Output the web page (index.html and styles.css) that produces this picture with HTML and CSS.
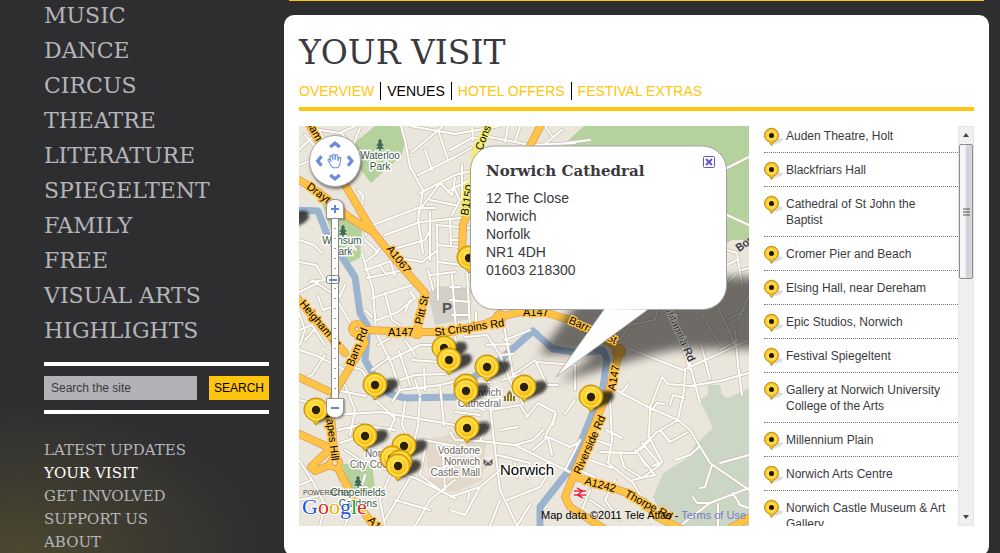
FILE: index.html
```html
<!DOCTYPE html>
<html lang="en">
<head>
<meta charset="utf-8">
<title>Your Visit - Venues</title>
<link rel="stylesheet" href="styles.css">
</head>
<body>
<div class="page">
<aside class="sidebar">
  <nav class="nav-main" aria-label="Programme">
    <a href="#">MUSIC</a><a href="#">DANCE</a><a href="#">CIRCUS</a><a href="#">THEATRE</a><a href="#">LITERATURE</a><a href="#">SPIEGELTENT</a><a href="#">FAMILY</a><a href="#">FREE</a><a href="#">VISUAL ARTS</a><a href="#">HIGHLIGHTS</a>
  </nav>
  <form class="search">
    <input class="search-box" type="text" value="Search the site" aria-label="Search the site">
    <button class="search-button" type="button">SEARCH</button>
  </form>
  <nav class="nav-sub" aria-label="Site">
    <a href="#">LATEST UPDATES</a><a href="#" class="current">YOUR VISIT</a><a href="#">GET INVOLVED</a><a href="#">SUPPORT US</a><a href="#">ABOUT</a>
  </nav>
</aside>
<div class="column">
<div class="banner-end"></div>
<main class="card">
  <h1>YOUR VISIT</h1>
  <nav class="tabs" aria-label="Your visit">
    <a href="#">OVERVIEW</a><a href="#" class="current">VENUES</a><a href="#">HOTEL OFFERS</a><a href="#">FESTIVAL EXTRAS</a>
  </nav>
  <div class="content">
  <section class="map" aria-label="Venue map">
    <svg class="map-art" viewBox="299 126 450 400" preserveAspectRatio="xMinYMin slice">
      <defs>
        <radialGradient id="pinFill" cx=".45" cy=".4" r=".62"><stop offset="0" stop-color="#fff29a"/><stop offset=".45" stop-color="#ffd832"/><stop offset="1" stop-color="#f0b400"/></radialGradient>
        <filter id="soft" x="-50%" y="-50%" width="200%" height="200%"><feGaussianBlur stdDeviation="1.600"/></filter>
        <filter id="wide" x="-20%" y="-30%" width="140%" height="160%"><feGaussianBlur stdDeviation="5"/></filter>
        <g id="shade"><path d="M-1 14L5 1Q10 -8 20 -6Q27 -1 18 6Q8 11 -1 14z" fill="#000" opacity=".7" filter="url(#soft)"/></g>
        <g id="pin">
          <path d="M-3.500 10.500L0 15L3.500 10.500A12 11.500 0 1 0 -3.500 10.500z" fill="#f5bd0c" stroke="#b98a08"/>
          <circle r="9.500" fill="url(#pinFill)" stroke="#ffe36b" stroke-width="1.500"/>
          <circle r="4.200" fill="#2b2008"/>
        </g>
        <g id="tree"><path d="M0 -6L3 -2H1.500L4.500 2H2L5 5H1V7H-1V5H-5L-2 2H-4.500L-1.500 -2H-3z" fill="#3d6e50" stroke="#e5efdc" stroke-width=".5"/></g>
        <g id="minor">
          <path d="M401 126L405 140L410 167L423 190L418 220L423 253M410 126L455 134L500 126M412 152L442 127M418 175L455 157L471 148M420 193L455 175L471 171M425 150L432 170M438 130L448 160M418 212L440 183L452 195L455 178M430 200L455 205M373 225L418 208L436 208M385 235L420 222L471 217M390 250L425 240L430 230M358 190L363 196L362 205L357 212L365 222L366 235M299 150L320 130L340 133L355 126M299 165L312 160M305 135L318 150M318 129L325 140M430 212V260M436 225L471 228M437 226L438 300M438 245L471 248M438 262L462 265M450 218L451 245M341 132L352 148M360 128L352 148"/>
          <path d="M365 270L400 258L422 262L438 250M367 278L403 270M372 298L412 285M362 253L373 290L376 330M377 320L398 312L415 298L410 292M385 293L392 320L400 325M380 266L387 275M390 260L395 276M377 334L392 365L400 390M390 360L420 345L440 345M372 370L390 357M299 262L316 265L325 280L310 282M312 280L335 295M299 292L318 283M299 330L312 325L325 345M299 350L315 355L345 370M325 355L312 375L299 380M318 296L323 310L340 304M337 300L352 326M345 285L338 300M365 310L372 317M299 240L314 245L322 253M305 340L314 330M345 365L362 370L367 378M410 300L405 312M405 340L415 355M378 345L390 338M399 351L410 385M345 235L356 250M365 240L378 252L365 262M385 243L376 252M430 275L455 272M428 270L433 290M299 313L305 330L300 345"/>
          <path d="M335 415L380 412L455 425L487 423M338 430L360 425L395 430M375 400L395 418L385 440M299 400L320 405M345 385L355 410L350 435M335 390L366 396M392 402L400 390L440 385L470 378M405 402L402 425L410 440M420 398L418 426L412 450M440 385L444 425M372 465L415 478L455 498M410 478L385 520M455 480L430 500L415 526M340 443L370 433M345 450L360 460M365 475L358 500M390 475L380 500L385 526M299 460L312 480L325 505L320 526M299 485L312 480M340 480L352 505L345 526M299 500L318 496M395 500L430 510M415 380L420 395M400 380L415 375L445 374M424 368L425 390M412 360L440 362M424 440L455 446M425 450L420 475L440 490"/>
          <path d="M450 432L455 440L480 441L515 445L545 460L572 473M488 385L493 433L500 490L517 526M450 497L480 487L500 470M507 500L540 487L550 470M517 526L530 505M580 440L565 470M515 445L533 440L543 430M533 450L548 437L570 447L578 443M548 437L552 455M490 410L520 405L527 416M480 441L487 425M497 455L530 463L528 478M515 463L517 477M450 510L465 515L480 487M470 490L468 500M450 300L470 302M452 315L470 315M467 270L470 330M465 337L487 335L500 355L512 385M503 320L513 375L535 360L547 385M537 362L575 365L575 390M505 340L530 330M452 275L456 330M455 337L462 360M487 345L510 344M500 355L513 354M502 380L520 375M548 385L558 385M455 380L490 382M450 287L460 287M476 312L476 330M526 418L538 403L555 412L553 425M565 414L575 400M500 430L518 427M517 388L523 405M487 400L510 398M470 405L485 410M455 412L480 415M443 455L445 490M438 468L455 465M500 500L490 526M545 437L556 415"/>
          <path d="M625 347L683 370L749 340M685 370L684 390L678 420M612 388L650 408L678 420L690 430L710 463L749 490M650 408L662 377L668 384L690 386L720 381L749 373M678 420L657 432L635 453L600 452M610 400L612 440L608 463L633 483L643 500M620 453L624 467L642 478L660 465M635 450L655 475M642 443L658 462M648 435L662 462L653 466M650 408L649 436M660 430L670 442L688 432M675 460L690 455L700 446M712 465L705 487L700 488M720 463L749 455M680 526L710 503L749 488M733 493L740 505L749 508M693 497L697 503L710 503M688 340L690 365L700 403M700 340L710 379M735 330L738 365L742 395M632 480L655 475M646 500L640 520M615 480L605 500L620 520M595 440L610 445M606 430L622 438M670 405L673 395L684 398M652 410L657 403L664 404M622 392L628 385M640 450L650 440M718 504V526M590 460L612 468M574 468L595 477M590 500L605 510M580 515L590 490M637 452L646 466"/>
          <path d="M620 340L630 325L655 320L658 308M715 300L735 345M735 275L715 295M727 320L745 310M702 315L720 345M670 309L690 370M720 350L738 340M749 295L738 320M727 168L749 157M727 215L749 225M727 250L737 253L742 285M727 265L737 260M742 270L749 268M450 150L472 138L490 137L530 145L575 143M508 126L505 142M520 126L515 142M562 130L545 144M472 126L473 140M450 190L470 180M452 215L460 200L455 190M462 165V200M450 240H465M480 145L474 150M566 143L590 140M545 126L552 136"/>
        </g>
        <g id="major">
          <path d="M308 123L345 185L373 232L394 258L425 293L417 332M296 178L320 193L350 218L373 232M296 297L345 353M357 330H365L417 332L450 332L485 324L500 317L520 312L547 313L570 320L607 341L620 350L610 387L573 477L565 497L570 507L606 530M575 477L610 487L627 493L645 503L657 517L680 528M731 528L749 518M362 336L365 343L338 387L330 405L335 463L352 495L375 528M296 376L328 391M297 433L330 448M335 463L315 471L311 467L329 450M542 123L528 150M462 250L463 225L472 200"/>
          <circle cx="357" cy="329" r="5"/><circle cx="335" cy="463" r="4"/><circle cx="500" cy="317" r="3"/><circle cx="417" cy="332" r="3"/><circle cx="619" cy="351" r="3"/>
        </g>
      </defs>
      <rect x="299" y="126" width="450" height="400" fill="#ebe6dc"/>
      <g fill="#b5d29c"><path d="M375 126H399L405 142L402 155L371 183L353 160V144zM322 203H332L362 230L360 258L347 264L337 250z"/><path d="M584 126H749V240H732L722 246L560 240V148z"/><path d="M342 464L372 463L375 488L352 499z"/></g>
      <path d="M700 400L708 395L708 385H720L722 395L728 398L749 388V526H667L653 497L663 473L688 458L695 445L713 428z" fill="#cbd7c4"/>
      <path d="M428 293L440 286L471 288V319L435 325zM457 453H480L492 465L475 473H458zM535 310L575 316L590 330" fill="#d3d0ca"/>
      <path d="M425 440L455 433L487 440L482 480L455 492L430 487zM350 350L360 345L364 355" fill="#e2d9ca"/>
      <g fill="none" stroke-linejoin="round" stroke-linecap="round">
        <path d="M296 210L318 211L328 237L342 257L355 277L360 313L368 327L365 360L375 378L390 394L405 398L455 397L466 382L500 360L533 331L553 349L580 353L603 350L607 360L603 387L583 437L567 473L540 507V528" stroke="#9ab3cf" stroke-width="7"/>
        <use href="#minor" stroke="#c9c0ae" stroke-width="3.400"/><use href="#minor" stroke="#fff" stroke-width="2"/>
        <path d="M487 126L475 150L464 220" stroke="#f4ee6c" stroke-width="5"/>
        <use href="#major" stroke="#d99b58" stroke-width="8"/><use href="#major" stroke="#ffc345" stroke-width="6.600"/>
        <circle cx="357" cy="329" r="2" fill="#ebe6dc" stroke="#d99b58"/><circle cx="335" cy="463" r="2.500" fill="#ebe6dc" stroke="#d99b58"/>
      </g>
      <path d="M539 354L568 315Q590 275 670 277H765V349H680Q650 353 560 382L595 354z" fill="#000" opacity=".53" filter="url(#wide)"/>
      <g class="labels road">
        <text transform="translate(306 123) rotate(61)">ham</text>
        <text transform="translate(306 188) rotate(37)">Drayton</text>
        <text transform="translate(386 249) rotate(52)">A1067</text>
        <text transform="translate(299 304) rotate(50)">Heigham St</text>
        <text transform="translate(353 367) rotate(-68)">Barn Rd</text>
        <text x="388" y="336">A147</text>
        <text transform="translate(422 325) rotate(-77)">Pitt St</text>
        <text transform="translate(435 336) rotate(-8)">St Crispins Rd</text>
        <text x="523" y="316">A147</text>
        <text transform="translate(568 323) rotate(24)">Barrack St</text>
        <text transform="translate(615 391) rotate(-80)">A147</text>
        <text transform="translate(580 475) rotate(-66)">Riverside Rd</text>
        <text transform="translate(584 484) rotate(15)">A1242</text>
        <text transform="translate(624 496) rotate(28)">Thorpe Rd</text>
        <text transform="translate(325 407) rotate(83)">Grapes Hill</text>
        <text transform="translate(367 521) rotate(45)">A11</text>
      </g>
      <g class="labels yellow"><text transform="translate(468 216) rotate(-80)">B1150</text><text transform="translate(482 151) rotate(-69)">Constitution</text></g>
      <g class="labels street"><text transform="translate(664 307) rotate(66)">Britannia Rd</text><text transform="translate(739 252) rotate(-35)">Bor</text></g>
      <g class="labels park" text-anchor="middle"><text x="380" y="159">Waterloo</text><text x="380" y="170">Park</text><text x="342" y="244">Wensum</text><text x="342" y="255">Park</text><text x="358" y="496">Chapelfields</text><text x="358" y="507">Gardens</text></g>
      <g class="labels place" text-anchor="end"><text x="501" y="396">Norwich</text><text x="501" y="407">Cathedral</text><text x="480" y="454">Vodafone</text><text x="480" y="465">Norwich</text><text x="480" y="476">Castle Mall</text><text x="401" y="457">Norwich</text><text x="403" y="468">City Council</text></g>
      <text class="labels city" x="500" y="475">Norwich</text>
      <use href="#tree" x="380" y="144"/><use href="#tree" x="343" y="230"/><use href="#tree" x="358" y="481"/>
      <path d="M505 401V396M508 401V394L509.500 392L511 394V401M514 401V396" fill="none" stroke="#897524" stroke-width="2"/>
      <path d="M483 458H493V466H483zM483 458L488 462L493 458M483 466L487 462M493 466L489 462" fill="#655e59" stroke="#fff" stroke-width=".8"/>
      <path d="M574 491H586M574 495H586M577 488L583 491L577 495L583 498" fill="none" stroke="#fff" stroke-width="3"/>
      <path d="M574 491H586M574 495H586M577 488L583 491L577 495L583 498" fill="none" stroke="#e7243c" stroke-width="1.400"/>
      <text class="parking" x="442" y="313">P</text>
      <g><use href="#shade" x="375" y="385"/><use href="#shade" x="444" y="348"/><use href="#shade" x="449" y="360"/><use href="#shade" x="487" y="367"/><use href="#shade" x="466" y="390"/><use href="#shade" x="524" y="387"/><use href="#shade" x="591" y="397"/><use href="#shade" x="467" y="428"/><use href="#shade" x="316" y="410"/><use href="#shade" x="365" y="436"/><use href="#shade" x="404" y="446"/><use href="#shade" x="398" y="466"/><use href="#shade" x="286" y="217"/></g>
      <g><use href="#pin" x="469" y="258"/><use href="#pin" x="444" y="348"/><use href="#pin" x="449" y="360"/><use href="#pin" x="487" y="367"/><use href="#pin" x="375" y="385"/><use href="#pin" x="466" y="386"/><use href="#pin" x="466" y="391"/><use href="#pin" x="524" y="387"/><use href="#pin" x="591" y="397"/><use href="#pin" x="316" y="410"/><use href="#pin" x="467" y="428"/><use href="#pin" x="365" y="436"/><use href="#pin" x="404" y="446"/><use href="#pin" x="392" y="458"/><use href="#pin" x="400" y="462"/><use href="#pin" x="398" y="466"/></g>
      <rect x="470.500" y="146" width="256" height="163.500" rx="24" fill="#fff" stroke="#a2a2a2"/>
      <path d="M604 309.500L556 377L648 309.500" fill="#fff" stroke="#a2a2a2" stroke-width=".8"/><path d="M605 306H650V309L605 310z" fill="#fff"/>
      <text class="powered" x="303" y="495">POWERED BY</text>
      <text class="google" x="302" y="514"><tspan fill="#1f57d6">G</tspan><tspan fill="#d82a22">o</tspan><tspan fill="#e8b000">o</tspan><tspan fill="#1f57d6">g</tspan><tspan fill="#199c33">l</tspan><tspan fill="#d82a22">e</tspan></text>
    </svg>
    <div class="pan">
      <svg viewBox="0 0 52 52" fill="none" stroke="#6a8fd6" stroke-width="3.500"><path d="M21 11.500L26 7.500L31 11.500M21 40.500L26 44.500L31 40.500M12 21L8 26L12 31M39.500 21L43.500 26L39.500 31"/><path d="M22 31L19 26Q18 24 20 24L22 27L20.500 21Q22 19.500 23 22L24 25L23.500 19.500Q25 18 26 20V25L27 19.500Q29 19 29 21V26L30.500 22Q32.500 22 32 24L31 30L29 33H24z" fill="#fff" stroke-width="1.100"/></svg>
    </div>
    <button class="zoom zoom-in" type="button" aria-label="Zoom in"><svg viewBox="0 0 10 10"><path d="M5 1V9M1 5H9" stroke="#5f87d3" stroke-width="2"/></svg></button>
    <input class="zoom-level" type="range" min="0" max="100" value="67" aria-label="Zoom level">
    <button class="zoom zoom-out" type="button" aria-label="Zoom out"><svg viewBox="0 0 10 10"><path d="M1 5H9" stroke="#5f87d3" stroke-width="2"/></svg></button>
    <div class="info">
      <h2>Norwich Cathedral</h2>
      <p>12 The Close<br>Norwich<br>Norfolk<br>NR1 4DH<br>01603 218300</p>
      <button class="close" type="button" aria-label="Close"><svg viewBox="0 0 12 12"><rect x=".5" y=".5" width="11" height="11" rx="1" fill="#fff" stroke="#5b57cf"/><path d="M3 3L9 9M9 3L3 9" stroke="#5b57cf" stroke-width="2"/></svg></button>
    </div>
    <p class="credit">Map data ©2011 Tele Atlas - <a href="#">Terms of Use</a></p>
  </section>
  <section class="venues" aria-label="Venues">
    <svg class="defs" width="0" height="0"><defs><g id="smallPin"><path d="M8 16L14 10L19 11Q20 14 8 17z" fill="#ddd"/><path d="M5.500 14L7.500 17.500L9.500 14A7 7 0 1 0 5.500 14z" fill="#f8bd18" stroke="#b58c1a"/><circle cx="7.500" cy="7.500" r="5.500" fill="#ffd64a"/><circle cx="7.500" cy="7.500" r="2.500" fill="#1e1705"/></g></defs></svg>
    <ul class="venue-list">
      <li><svg class="mark"><use href="#smallPin"/></svg><a href="#">Auden Theatre, Holt</a></li>
      <li><svg class="mark"><use href="#smallPin"/></svg><a href="#">Blackfriars Hall</a></li>
      <li><svg class="mark"><use href="#smallPin"/></svg><a href="#">Cathedral of St John the Baptist</a></li>
      <li><svg class="mark"><use href="#smallPin"/></svg><a href="#">Cromer Pier and Beach</a></li>
      <li><svg class="mark"><use href="#smallPin"/></svg><a href="#">Elsing Hall, near Dereham</a></li>
      <li><svg class="mark"><use href="#smallPin"/></svg><a href="#">Epic Studios, Norwich</a></li>
      <li><svg class="mark"><use href="#smallPin"/></svg><a href="#">Festival Spiegeltent</a></li>
      <li><svg class="mark"><use href="#smallPin"/></svg><a href="#">Gallery at Norwich University College of the Arts</a></li>
      <li><svg class="mark"><use href="#smallPin"/></svg><a href="#">Millennium Plain</a></li>
      <li><svg class="mark"><use href="#smallPin"/></svg><a href="#">Norwich Arts Centre</a></li>
      <li><svg class="mark"><use href="#smallPin"/></svg><a href="#">Norwich Castle Museum &amp; Art Gallery</a></li>
    </ul>
    <div class="scrollbar" aria-hidden="true">
      <svg class="arrow" viewBox="0 0 14 17"><path d="M4 10L7 6L10 10z" fill="#444"/></svg>
      <div class="thumb"><svg viewBox="0 0 8 8"><path d="M1 1H8M1 4H8M1 7H8" stroke="#555"/></svg></div>
      <svg class="arrow arrow-down" viewBox="0 0 14 17"><path d="M4 7L7 11L10 7z" fill="#444"/></svg>
    </div>
  </section>
  </div>
</main>
</div>
</div>
</body>
</html>
```
FILE: styles.css
```css
* { box-sizing: border-box; }
body {
  margin: 0;
  height: 100vh;
  overflow: hidden;
  background: radial-gradient(ellipse 250px 150px at 20px 100%, #4b4730, rgba(46, 46, 48, 0)) #2e2e30;
  font-family: "Liberation Sans", Arial, sans-serif;
  color: #3a3a3e;
}
a { color: inherit; text-decoration: none; }
h1, h2, p, ul { margin: 0; padding: 0; font-weight: normal; }
button, input { border: 0; padding: 0; font-family: inherit; }
.page { display: grid; grid-template-columns: 225px 1fr; column-gap: 15px; padding: 0 11px 0 44px; align-items: start; }
.nav-main, .nav-sub { display: flex; flex-direction: column; font-family: "DejaVu Serif", Rockwell, serif; color: #b4b5ba; }
.nav-main { margin-top: -2px; font-size: 22px; line-height: 35px; }
.search {
  display: flex;
  gap: 12px;
  margin-top: 14px;
  padding: 10px 0;
  border-top: 4px solid #fff;
  border-bottom: 4px solid #fff;
}
.search-box { flex: 1; min-width: 0; height: 24px; padding: 0 7px; background: #b1b2b5; color: #3a3a3e; font-size: 12px; }
.search-button { width: 60px; height: 24px; background: #ffc40d; color: #000; font-size: 12px; }
.nav-sub { margin-top: 25px; font-size: 15px; line-height: 23px; }
.nav-sub .current { color: #fff; }
.banner-end { height: 1px; margin: 0 5px 14px; background: #ffc40d; }
.card { background: #fff; border-radius: 10px; padding: 15px 15px 30px; }
h1 { font-family: "DejaVu Serif", Rockwell, serif; font-size: 33px; line-height: 46px; }
.tabs { display: flex; margin-top: 6px; padding-bottom: 7px; border-bottom: 4px solid #ffc40d; font-size: 14px; line-height: 18px; color: #ffc40d; }
.tabs a { padding: 0 6px; border-left: 1px solid #000; }
.tabs a:first-child { padding-left: 0; border-left: 0; }
.tabs .current { color: #000; }
.content { display: grid; grid-template-columns: 1fr 210px; column-gap: 15px; margin-top: 15px; height: 400px; }
.map { position: relative; overflow: hidden; }
.map-art { display: block; width: 100%; height: 100%; }
.labels { font-size: 11px; fill: #222; paint-order: stroke; stroke: #fff; stroke-width: 3px; stroke-linejoin: round; }
.road { stroke: #ffc345; fill: #000; }
.yellow { stroke: #f4ee6c; fill: #000; }
.street { stroke-width: 1px; stroke: #bbb; fill: #222; }
.park { fill: #34563f; font-size: 10px; }
.place { fill: #6b6460; font-size: 10px; }
.city { font-size: 15px; fill: #000; }
.parking { font-size: 15px; font-weight: bold; fill: #55555a; }
.powered { font-size: 7px; fill: #555; }
.google { font-family: "Liberation Serif", serif; font-size: 22px; stroke: #fff; stroke-width: 2px; paint-order: stroke; }
.pan { position: absolute; left: 10px; top: 9px; width: 52px; height: 52px; border-radius: 50%; background: #fff; border: 1px solid #aaa; box-shadow: 1px 2px 3px rgba(0, 0, 0, .5); }
.pan svg { display: block; width: 100%; height: 100%; }
.zoom { position: absolute; left: 27px; width: 18px; height: 20px; display: grid; place-items: center; background: #fff; border: 1px solid #999; box-shadow: 1px 1px 2px rgba(0, 0, 0, .4); }
.zoom svg { width: 10px; height: 10px; }
.zoom-in { top: 73px; border-radius: 8px 8px 0 0; }
.zoom-out { top: 272px; border-radius: 0 0 8px 8px; }
.zoom-level {
  position: absolute;
  left: 33px;
  top: 93px;
  width: 6px;
  height: 179px;
  margin: 0;
  appearance: none;
  writing-mode: vertical-lr;
  direction: rtl;
  background: linear-gradient(90deg, #fff 2px, transparent 2px 4px, #fff 4px), repeating-linear-gradient(#fff 0 9px, #999 9px 10px);
  outline: 1px solid #888;
}
.zoom-level::-webkit-slider-thumb {
  appearance: none;
  width: 14px;
  height: 9px;
  margin-left: -4px;
  border: 1px solid #888;
  border-radius: 3px;
  background: linear-gradient(#5f87d3, #5f87d3) center / 8px 2px no-repeat #fff;
}
.info { position: absolute; left: 187px; top: 35px; width: 230px; }
.info h2 { font-family: "DejaVu Serif", Rockwell, serif; font-size: 15px; line-height: 20px; font-weight: bold; }
.info p { margin-top: 8px; font-size: 14px; line-height: 18px; }
.close { position: absolute; right: 1px; top: -5px; width: 12px; height: 12px; background: none; }
.close svg { display: block; width: 12px; height: 12px; }
.credit { position: absolute; right: 3px; bottom: 4px; font-size: 11px; line-height: 13px; color: #000; }
.credit a { color: #7777cc; }
.venues { display: flex; min-height: 0; }
.defs { position: absolute; }
.venue-list { flex: 1; list-style: none; overflow: hidden; font-size: 12px; line-height: 16px; }
.venue-list li { display: flex; gap: 2px; padding: 9px 6px 8px 0; border-bottom: 1px dotted #777; }
.venue-list li:first-child { padding-top: 2px; }
.mark { flex: none; width: 20px; height: 16px; overflow: visible; }
.scrollbar { display: flex; flex-direction: column; width: 16px; background: #f0f0f0; border: 1px solid #e6e6e6; }
.arrow { flex: none; width: 14px; height: 17px; }
.arrow-down { margin-top: auto; }
.thumb { display: grid; place-items: center; height: 135px; border: 1px solid #8c8c90; border-radius: 2px; background: linear-gradient(90deg, #f6f6f6 0 40%, #cfcfd4 60%, #dcdce0); }
.thumb svg { width: 8px; height: 8px; }
```
